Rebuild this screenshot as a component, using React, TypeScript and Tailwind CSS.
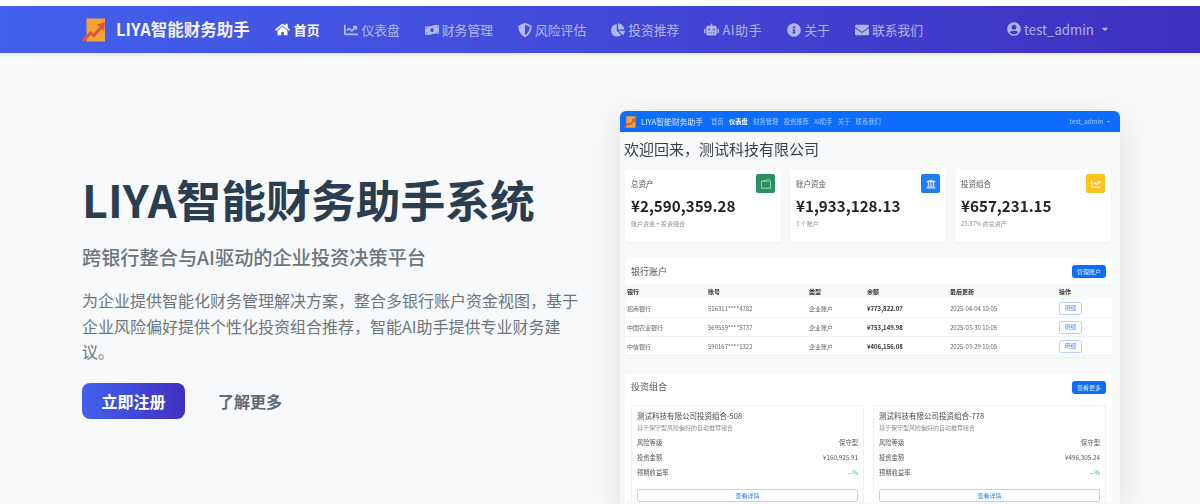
import {
  FaHome,
  FaChartLine,
  FaMoneyBillWave,
  FaShieldAlt,
  FaChartPie,
  FaRobot,
  FaInfoCircle,
  FaEnvelope,
  FaUserCircle,
  FaCaretDown,
  FaUniversity,
} from "react-icons/fa";
import { BsWallet2 } from "react-icons/bs";

const navItems = [
  { label: "仪表盘", icon: FaChartLine, size: "text-[14px]", extra: "" },
  { label: "财务管理", icon: FaMoneyBillWave, size: "text-[14px]", extra: "" },
  { label: "风险评估", icon: FaShieldAlt, size: "text-[14px]", extra: "" },
  { label: "投资推荐", icon: FaChartPie, size: "text-[14px]", extra: "" },
  { label: "AI助手", icon: FaRobot, size: "text-[15px]", extra: "tracking-[0.7px]" },
  { label: "关于", icon: FaInfoCircle, size: "text-[14px]", extra: "" },
  { label: "联系我们", icon: FaEnvelope, size: "text-[14px]", extra: "" },
];

const accounts = [
  ["招商银行", "516311****4782", "企业账户", "¥773,822.07", "2025-04-04 10:05"],
  ["中国农业银行", "569559****5737", "企业账户", "¥753,149.98", "2025-03-30 10:05"],
  ["中信银行", "590167****1322", "企业账户", "¥406,156.08", "2025-03-29 10:05"],
];

const portfolios = [
  { name: "测试科技有限公司投资组合-508", amount: "¥160,925.91" },
  { name: "测试科技有限公司投资组合-778", amount: "¥496,305.24" },
];

function Logo({ size }: { size: number }) {
  return (
    <svg width={size} height={size} viewBox="0 0 24 24">
      <path d="M4.5 0.5h18.5v23H4.5z" fill="#f0a432" />
      <path d="M1.5 22.5l7-7.5 3.5 2.5 7.5-8.5" fill="none" stroke="#e2504a" strokeWidth="3" strokeLinecap="round" />
      <path d="M15 6.5L23 4l-1 9z" fill="#e2504a" />
    </svg>
  );
}

function StatCard(props: { label: string; value: string; note: string; color: string; icon: React.ReactNode }) {
  return (
    <div className="h-[73px] w-[156px] rounded-[3px] bg-white px-[6px] pt-[5px] shadow-[0_1px_3px_rgba(0,0,0,0.05)]">
      <div className="flex items-start justify-between">
        <span className="mt-[5px] text-[7.5px] leading-[10px] text-[#555]">{props.label}</span>
        <div className={`flex h-[19px] w-[19px] items-center justify-center rounded-[2px] text-[10px] text-white/80 ${props.color}`}>
          {props.icon}
        </div>
      </div>
      <div className="text-[15.2px] leading-[24px] font-bold text-[#212529]">{props.value}</div>
      <div className="mt-[3px] text-[6px] leading-[8px] text-[#8a9096]">{props.note}</div>
    </div>
  );
}

function PortfolioCard({ name, amount }: { name: string; amount: string }) {
  return (
    <div className="w-[233px] rounded-t-[3px] border border-b-0 border-[#f0f1f3] px-[5px] pt-[4px]">
      <div className="text-[7.5px] leading-[12px] text-[#444]">{name}</div>
      <div className="mt-[1px] text-[6px] leading-[10px] text-[#8a9096]">基于保守型风险偏好的自动推荐组合</div>
      <div className="mt-[2.5px] flex h-[15px] items-center justify-between text-[6.3px] text-[#555]">
        <span>风险等级</span>
        <span>保守型</span>
      </div>
      <div className="flex h-[15px] items-center justify-between text-[6.3px] text-[#555]">
        <span>投资金额</span>
        <span>{amount}</span>
      </div>
      <div className="flex h-[15px] items-center justify-between text-[6.3px] text-[#555]">
        <span>预期收益率</span>
        <span className="text-[#5aa583]">--%</span>
      </div>
      <div className="mt-[8.5px] flex h-[13px] items-center justify-center rounded-[2px] border border-[#bcd3f5] text-[6px] text-[#2f7cf0]">
        查看详情
      </div>
    </div>
  );
}

function Preview() {
  return (
    <div className="h-[393px] w-[500px] shrink-0 overflow-hidden rounded-t-[6px] bg-[#f8f9fa] shadow-[0_8px_30px_rgba(0,0,0,0.12)] blur-[0.4px]">
      <div className="flex h-[21px] items-center bg-[#0d6efd] pr-[9px] pl-[4px] text-[6.3px] text-white/60">
        <Logo size={12} />
        <span className="mr-[8px] ml-[5px] text-[7.8px] text-white/85">LIYA智能财务助手</span>
        <div className="flex gap-[5.3px]">
          <span>首页</span>
          <span className="font-bold text-white">仪表盘</span>
          <span>财务管理</span>
          <span>投资推荐</span>
          <span>AI助手</span>
          <span>关于</span>
          <span>联系我们</span>
        </div>
        <span className="ml-auto flex items-center gap-[3px]">
          test_admin
          <FaCaretDown className="text-[5px]" />
        </span>
      </div>

      <div className="pt-[6px] pr-[8px] pl-[5px]">
        <h2 className="-ml-[1px] text-[15px] leading-[22px] text-[#3a3f44]">欢迎回来，测试科技有限公司</h2>
        <div className="mt-[9px] flex gap-[9px]">
          <StatCard label="总资产" value="¥2,590,359.28" note="账户资金 + 投资组合" color="bg-[#2b9163]" icon={<BsWallet2 />} />
          <StatCard label="账户资金" value="¥1,933,128.13" note="3 个账户" color="bg-[#1f7cf5]" icon={<FaUniversity />} />
          <StatCard label="投资组合" value="¥657,231.15" note="25.37% 的总资产" color="bg-[#ffc120]" icon={<FaChartLine />} />
        </div>

        <div className="mt-[17px] h-[98px] rounded-[3px] bg-white shadow-[0_1px_2px_rgba(0,0,0,0.05)]">
          <div className="flex h-[25px] items-center justify-between px-[6px]">
            <span className="text-[9px] text-[#555]">银行账户</span>
            <span className="flex h-[13px] w-[34px] items-center justify-center rounded-[3px] bg-[#0d6efd] text-[6px] text-white/85">管理账户</span>
          </div>
          <div className="grid h-[15px] grid-cols-[81px_101px_58px_83px_109px_1fr] items-center bg-[#f8f9fa] pl-[2px] text-[6px] font-bold text-[#333]">
            <span>银行</span>
            <span>账号</span>
            <span>类型</span>
            <span>余额</span>
            <span>最后更新</span>
            <span>操作</span>
          </div>
          {accounts.map((row) => (
            <div key={row[1]} className="grid h-[19px] grid-cols-[81px_101px_58px_83px_109px_1fr] items-center border-b border-[#f1f2f4] pl-[2px] text-[6px] text-[#666]">
              <span>{row[0]}</span>
              <span>{row[1]}</span>
              <span>{row[2]}</span>
              <span className="font-bold text-[#333]">{row[3]}</span>
              <span>{row[4]}</span>
              <span className="flex h-[13px] w-[23px] items-center justify-center rounded-[2px] border border-[#bcd3f5] text-[5.5px] text-[#4d8ff0]">明细</span>
            </div>
          ))}
        </div>

        <div className="mt-[17px] rounded-t-[3px] bg-white pl-[6px]">
          <div className="mb-[5px] flex h-[26px] items-center justify-between pr-[6px]">
            <span className="text-[9px] text-[#555]">投资组合</span>
            <span className="flex h-[13px] w-[34px] items-center justify-center rounded-[3px] bg-[#0d6efd] text-[6px] text-white/85">查看更多</span>
          </div>
          <div className="flex gap-[9px]">
            {portfolios.map((p) => (
              <PortfolioCard key={p.name} name={p.name} amount={p.amount} />
            ))}
          </div>
        </div>
      </div>
    </div>
  );
}

export default function App() {
  return (
    <div className="h-[504px] w-[1200px] overflow-hidden bg-white font-['Noto_Sans_CJK_SC','Noto_Sans',sans-serif]">
      <div className="h-[6px] bg-white" />
      <nav className="relative z-10 flex h-[47px] items-center bg-gradient-to-r from-[#4361ee] to-[#3f2fc0] pl-[82px] text-[12.8px] text-white/60 shadow-[0_2px_4px_rgba(0,0,0,0.08)]">
        <Logo size={24} />
        <span className="ml-[10px] text-[16.5px] font-bold text-white/95">LIYA智能财务助手</span>
        <div className="ml-[25px] flex items-center gap-[25px]">
          <span className="flex items-center gap-[4px] font-bold text-white">
            <FaHome className="text-[15px]" />
            首页
          </span>
          {navItems.map((item) => (
            <span key={item.label} className={`flex items-center gap-[3px] ${item.extra}`}>
              <item.icon className={item.size} />
              {item.label}
            </span>
          ))}
        </div>
        <span className="ml-[84px] flex items-center gap-[3px] text-[13.2px]">
          <FaUserCircle className="text-[14px]" />
          test_admin
          <FaCaretDown className="ml-[3px] text-[10px]" />
        </span>
      </nav>

      <main className="flex h-[451px] bg-[#f8f9fb] pt-[58px] pl-[82px]">
        <div className="w-[498px] shrink-0 pt-[58px]">
          <h1 className="text-[44.8px] leading-[60px] font-bold text-[#2b3e50]">LIYA智能财务助手系统</h1>
          <p className="mt-[13px] text-[19.2px] leading-[30px] font-medium text-[#6c757d]">跨银行整合与AI驱动的企业投资决策平台</p>
          <p className="mt-[16px] text-[16px] leading-[25.6px] text-[#6c757d]">
            为企业提供智能化财务管理解决方案，整合多银行账户资金视图，基于企业风险偏好提供个性化投资组合推荐，智能AI助手提供专业财务建议。
          </p>
          <div className="mt-[18px] flex items-center gap-[33px]">
            <span className="flex h-[36px] w-[103px] items-center justify-center rounded-[8px] bg-gradient-to-r from-[#4361ee] to-[#3f2fc0] text-[16px] font-bold text-white">
              立即注册
            </span>
            <span className="text-[16px] font-bold text-[#5f6a74]">了解更多</span>
          </div>
        </div>
        <div className="ml-[40px]">
          <Preview />
        </div>
      </main>
    </div>
  );
}
